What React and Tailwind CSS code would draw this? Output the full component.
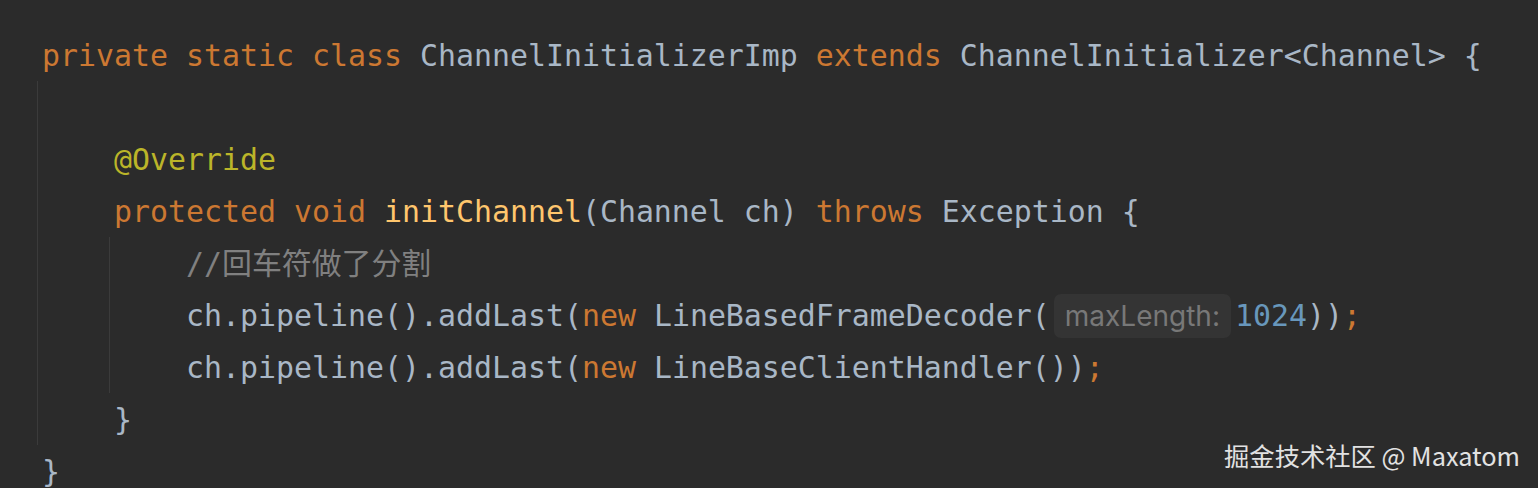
const K = ({ children }) => <span className="text-[#cc7832]">{children}</span>;
const T = ({ children }) => <span className="text-[#a9b7c6]">{children}</span>;

const Line = ({ indent = 0, guides = 0, children }) => {
  const blocks = Array.from({ length: indent });
  return (
    <div className="flex h-[52px] items-stretch whitespace-pre">
      {blocks.map((_, i) => (
        <span
          key={i}
          className={i < guides ? "w-[72px] shrink-0 border-l border-[#3b3b3b]" : "w-[72px] shrink-0"}
        />
      ))}
      <span className="ml-[5px] flex items-center pt-[1px] leading-[52px]">{children}</span>
    </div>
  );
};

const Hint = ({ children }) => (
  <span
    className="mx-[4px] inline-flex h-[44px] items-center rounded-[7px] bg-[#343434] px-[11px] text-[28px] text-[#787878]"
    style={{ fontFamily: "Inter, 'Noto Sans', sans-serif" }}
  >
    {children}
  </span>
);

export default function App() {
  return (
    <div
      className="relative h-[488px] w-[1538px] overflow-hidden bg-[#2b2b2b] pl-[37px] pt-[29px] text-[29.9px] text-[#a9b7c6]"
      style={{ fontFamily: "'DejaVu Sans Mono', 'Liberation Mono', 'Noto Sans CJK SC', monospace" }}
    >
      <Line>
        <K>private static class </K>
        <T>ChannelInitializerImp </T>
        <K>extends </K>
        <T>{"ChannelInitializer<Channel> {"}</T>
      </Line>
      <Line indent={1} guides={1} />
      <Line indent={1} guides={1}>
        <span className="text-[#bbb529]">@Override</span>
      </Line>
      <Line indent={1} guides={1}>
        <K>protected void </K>
        <span className="text-[#ffc66d]">initChannel</span>
        <T>(Channel ch) </T>
        <K>throws </K>
        <T>{"Exception {"}</T>
      </Line>
      <Line indent={2} guides={2}>
        <span className="text-[#808080]">//回车符做了分割</span>
      </Line>
      <Line indent={2} guides={2}>
        <T>ch.pipeline().addLast(</T>
        <K>new </K>
        <T>LineBasedFrameDecoder(</T>
        <Hint>maxLength:</Hint>
        <span className="text-[#6897bb]">1024</span>
        <T>))</T>
        <K>;</K>
      </Line>
      <Line indent={2} guides={2}>
        <T>ch.pipeline().addLast(</T>
        <K>new </K>
        <T>LineBaseClientHandler())</T>
        <K>;</K>
      </Line>
      <Line indent={1} guides={1}>
        <T>{"}"}</T>
      </Line>
      <Line>
        <T>{"}"}</T>
      </Line>

      <div
        className="absolute bottom-[13px] right-[18px] text-[25.3px] text-[#e2e2e2]"
        style={{ fontFamily: "'Noto Sans CJK SC', 'Noto Sans', sans-serif" }}
      >
        掘金技术社区 @ Maxatom
      </div>
    </div>
  );
}
